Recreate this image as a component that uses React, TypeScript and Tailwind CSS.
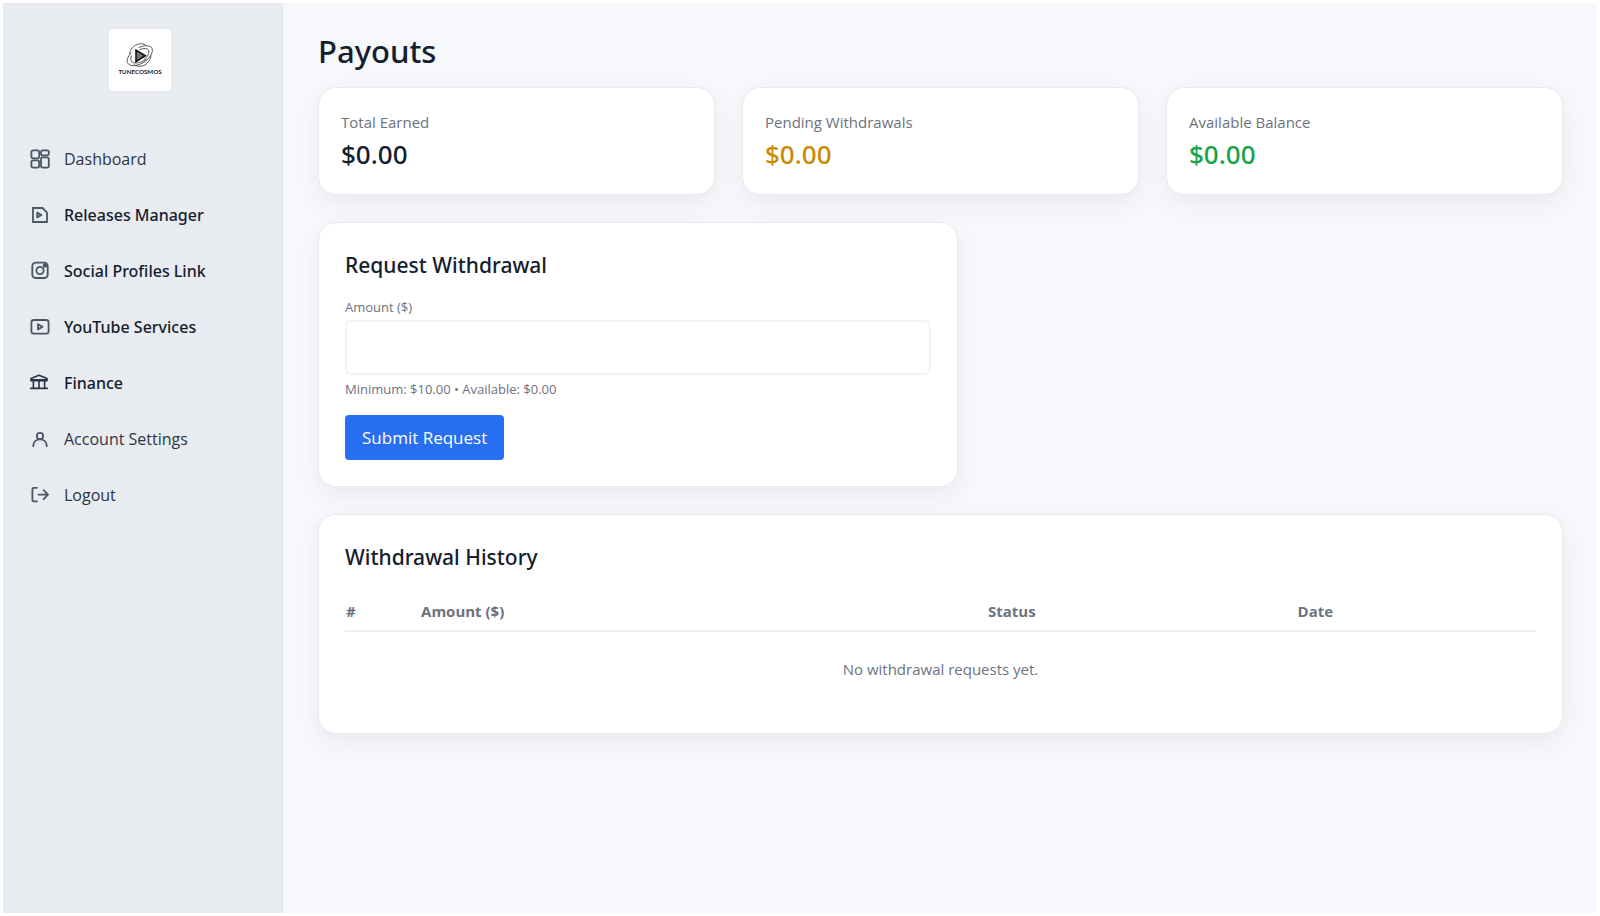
import type { ReactNode } from 'react';

function Icon({ children, className = '' }: { children: ReactNode; className?: string }) {
  return (
    <svg
      viewBox="0 0 24 24"
      className={`size-6 shrink-0 ${className}`}
      fill="none"
      stroke="currentColor"
      strokeWidth="1.8"
      strokeLinecap="round"
      strokeLinejoin="round"
      aria-hidden="true"
    >
      {children}
    </svg>
  );
}

const navItems: { label: string; strong?: boolean; icon: ReactNode }[] = [
  {
    label: 'Dashboard',
    icon: (
      <Icon>
        <rect x="3.4" y="3.4" width="7.8" height="8" rx="1.8" />
        <rect x="13" y="3.4" width="7.8" height="5" rx="1.8" />
        <rect x="3.4" y="13.4" width="7.8" height="7.2" rx="1.8" />
        <rect x="13" y="10.4" width="7.8" height="10.2" rx="1.8" />
      </Icon>
    ),
  },
  {
    label: 'Releases Manager',
    strong: true,
    icon: (
      <Icon>
        <path d="M5 5h9.500l4.500 4.500V19H5z" strokeLinejoin="miter" />
        <path d="M9.200 9.600v4.800l4.200-2.400z" fill="currentColor" fillOpacity=".35" />
      </Icon>
    ),
  },
  {
    label: 'Social Profiles Link',
    strong: true,
    icon: (
      <Icon>
        <rect x="4.300" y="3.600" width="15.400" height="15.400" rx="3.400" />
        <circle cx="12" cy="11.500" r="3.600" />
        <circle cx="16.900" cy="6.500" r="1.300" fill="currentColor" />
      </Icon>
    ),
  },
  {
    label: 'YouTube Services',
    strong: true,
    icon: (
      <Icon>
        <rect x="3.400" y="5" width="17.200" height="13.600" rx="2.400" />
        <path d="M10 9.200v5.200l4.600-2.600z" />
      </Icon>
    ),
  },
  {
    label: 'Finance',
    strong: true,
    icon: (
      <Icon className="text-[#2b3444]">
        <path d="M3 7.400 11 4.200l8 3.200v2.400H3zM3 8.700h16M2.700 17.400h16.600M5.400 9.800v7.400M11 9.800v7.400M16.600 9.800v7.400" strokeWidth="1.6" />
      </Icon>
    ),
  },
  {
    label: 'Account Settings',
    icon: (
      <Icon>
        <circle cx="12" cy="9" r="3.200" />
        <path d="M5.200 19.200c.2-4.200 3-6.800 6.800-6.800s6.600 2.600 6.800 6.800" />
      </Icon>
    ),
  },
  {
    label: 'Logout',
    icon: (
      <Icon>
        <path d="M9 4.800H5.800a1.400 1.400 0 0 0-1.400 1.400v10.800a1.400 1.400 0 0 0 1.400 1.400H9M10.500 11.600h9.500M15.600 7.100l4.400 4.500-4.400 4.500" />
      </Icon>
    ),
  },
];

const stats = [
  { label: 'Total Earned', value: '$0.00', color: 'text-[#14202e]' },
  { label: 'Pending Withdrawals', value: '$0.00', color: 'text-[#ca8a04]' },
  { label: 'Available Balance', value: '$0.00', color: 'text-[#16a34a]' },
];

function Logo() {
  return (
    <svg viewBox="0 0 62 62" className="size-[62px] rounded bg-white" role="img" aria-label="TuneCosmos">
      <g fill="none" stroke="#444" strokeWidth=".9" strokeLinecap="round">
        <path d="M20.500 24.500c1-6 6.500-10 12-9.700 2 .1 3.500.8 4.500 1.700" />
        <path d="M30 18.500c5-2.300 10-2.500 12.300-.2 3 3.300-.5 10-6.300 14.200s-14 5.500-16.800 2.300c-2.300-2.700-.7-7 2.800-10.800" />
        <path d="M31 20.500c4-1.500 7.500-1.200 8.500.5 1.500 2.500-.8 6.500-4.500 9.500" />
        <path d="M22.500 27c-2 4 0 7 4 7s8-1.500 11-4" />
        <path d="M42 27c-1 5.500-5 10-11 10.300-2.500.1-4.500-.5-6-1.500" />
      </g>
      <path d="M27 21.200v11.300l9.300-5.800z" fill="#777" stroke="#111" strokeWidth="1.600" />
      <text x="31" y="45.200" textAnchor="middle" fontFamily="Lato, sans-serif" fontWeight="700" fontSize="6.200" fill="#222">
        TUNECOSMOS
      </text>
    </svg>
  );
}

const card =
  'rounded-[18px] border border-[#e8eaee] bg-white shadow-[0_8px_24px_rgba(15,23,42,0.06)]';

// Open Sans has no medium weight, so medium text is set in Noto Sans.
const medium = "font-['Noto_Sans',sans-serif] font-medium";

export default function App() {
  return (
    <div className="flex min-h-screen bg-white p-[3px] font-['Open_Sans','Noto_Sans',sans-serif] text-[#14202e]">
      <aside className="w-[280px] shrink-0 border-r border-[#e4e7ec] bg-[#e8ebf0]">
        <div className="flex h-[116px] justify-center border-b border-[#e2e5ea] pt-[26px] pr-[6px]">
          <Logo />
        </div>
        <nav className="flex flex-col pt-3" aria-label="Main">
          {navItems.map((item) => (
            <a key={item.label} href="#" className="flex h-14 items-center gap-3 px-[25px] text-[#4a5565]">
              {item.icon}
              <span className={item.strong ? `text-base ${medium} text-[#14202e]` : 'text-base text-[#2b3645]'}>
                {item.label}
              </span>
            </a>
          ))}
        </nav>
      </aside>

      <main className="flex min-w-0 flex-1 flex-col gap-[27px] bg-[#f7f8fc] pt-[26px] pr-[34px] pl-[35px]">
        <section>
          <h1 className={`mb-[14px] text-[31px] leading-[44px] ${medium}`}>Payouts</h1>
          <div className="grid grid-cols-3 gap-[27px]">
            {stats.map((stat) => (
              <div key={stat.label} className={`${card} px-[22px] pt-[22px] pb-5`}>
                <p className="text-[15px] leading-6 text-[#6b7280]">{stat.label}</p>
                <p className={`text-[26px] leading-10 ${medium} ${stat.color}`}>{stat.value}</p>
              </div>
            ))}
          </div>
        </section>

        <form className={`${card} max-w-[640px] p-[26px]`} onSubmit={(e) => e.preventDefault()}>
          <h2 className={`text-[21px] leading-8 ${medium}`}>Request Withdrawal</h2>
          <label htmlFor="amount" className="mt-4 mb-[3px] block text-[13px] leading-5 text-[#6b7280]">
            Amount ($)
          </label>
          <input
            id="amount"
            type="text"
            inputMode="decimal"
            className="block h-[55px] w-full rounded-md border-2 border-[#f2f3f4] bg-white px-4 text-base"
          />
          <p className="mt-1 text-[13px] leading-5 text-[#6b7280]">Minimum: $10.00 • Available: $0.00</p>
          <button type="submit" className="mt-4 h-[45px] rounded bg-[#276ef1] px-[17px] text-[17px] text-white">
            Submit Request
          </button>
        </form>

        <section className={`${card} p-[26px]`}>
          <h2 className={`text-[21px] leading-8 ${medium}`}>Withdrawal History</h2>
          <table className="mt-3 w-full table-fixed text-[15px]">
            <thead>
              <tr className="border-b-2 border-[#eeeff1] text-left leading-6 text-[#6b7280]">
                <th scope="col" className="w-[6.3%] px-px pt-[14px] pb-[7px] font-bold">#</th>
                <th scope="col" className="w-[47.6%] px-px pt-[14px] pb-[7px] font-bold">Amount ($)</th>
                <th scope="col" className="w-[26%] px-px pt-[14px] pb-[7px] font-bold">Status</th>
                <th scope="col" className="px-px pt-[14px] pb-[7px] font-bold">Date</th>
              </tr>
            </thead>
            <tbody>
              <tr>
                <td colSpan={4} className="h-[76px] text-center text-[#6b7280]">
                  No withdrawal requests yet.
                </td>
              </tr>
            </tbody>
          </table>
        </section>
      </main>
    </div>
  );
}
